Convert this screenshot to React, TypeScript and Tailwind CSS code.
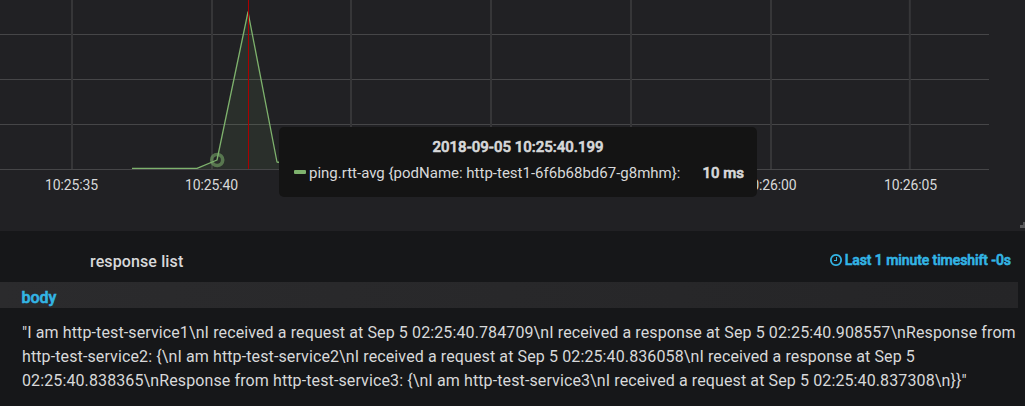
const gridRows = [34, 79, 124, 169];
const gridColumns = [72, 212, 351, 491, 631, 771, 909.8];
const labels = [
  { x: 71.5, label: "10:25:35" },
  { x: 211.5, label: "10:25:40" },
  { x: 770, label: "10:26:00" },
  { x: 910.5, label: "10:26:05" },
];
const series = "132,168.3 197,168.3 217,160 248,12 277,162 310,168";

function Chart() {
  return (
    <svg width="1025" height="231" viewBox="0 0 1025 231" className="block">
      {gridRows.map((y) => (
        <rect key={y} x="0" y={y} width="989" height="1" fill="#464648" />
      ))}
      {gridColumns.map((x) => (
        <rect key={x} x={x - 1} y="0" width="2" height="169" fill="#363638" />
      ))}
      <polygon points={`132,169 ${series} 310,169`} fill="#7eb26d" fillOpacity="0.1" />
      <polyline points={series} fill="none" stroke="#7eb26d" strokeWidth="1.3" strokeLinejoin="round" />
      <circle cx="217.2" cy="160" r="5.5" fill="none" stroke="#7eb26d" strokeOpacity="0.55" strokeWidth="3.6" />
      <rect x="248" y="0" width="1" height="169" fill="#aa0000" />
      {labels.map((t) => (
        <text key={t.label} x={t.x} y="190" textAnchor="middle" fontSize="14" letterSpacing="-0.15" fill="#d8d9da">
          {t.label}
        </text>
      ))}
      <path d="M1025 222v6h-5v-3h3v-3z" fill="#59595b" />
    </svg>
  );
}

function Tooltip() {
  return (
    <div className="absolute left-[279px] top-[127px] h-[70px] w-[478px] rounded-[5px] bg-[#141414] pt-[8px] pr-[13px] pl-[15px] text-[15px]">
      <div className="pr-[2px] text-center leading-[24px] font-medium [-webkit-text-stroke:0.6px]">
        2018-09-05 10:25:40.199
      </div>
      <div className="flex items-center pt-[2px] leading-[24px] whitespace-nowrap">
        <span className="mr-[3px] -mt-[2px] h-[4px] w-[12px] rounded-[1px] bg-[#7eb26d]" />
        <span>{"ping.rtt-avg {podName: http-test1-6f6b68bd67-g8mhm}:"}</span>
        <span className="ml-auto font-medium [-webkit-text-stroke:0.6px]">10 ms</span>
      </div>
    </div>
  );
}

function ClockIcon() {
  return (
    <svg width="12" height="12" viewBox="0 128 1536 1536" fill="currentColor">
      <path d="M896 544v448q0 14-9 23t-23 9h-320q-14 0-23-9t-9-23v-64q0-14 9-23t23-9h224v-352q0-14 9-23t23-9h64q14 0 23 9t9 23zm416 352q0-148-73-273t-198-198-273-73-273 73-198 198-73 273 73 273 198 198 273 73 273-73 198-198 73-273zm224 0q0 209-103 385.5t-279.5 279.5-385.5 103-385.5-103-279.5-279.5-103-385.5 103-385.5 279.5-279.5 385.5-103 385.5 103 279.5 279.5 103 385.5z" />
    </svg>
  );
}

export default function App() {
  return (
    <main className="h-[406px] w-[1025px] overflow-hidden bg-[#161719] font-['Roboto',sans-serif] text-[#d8d9da]">
      <section className="relative h-[231px] bg-[#212124]">
        <Chart />
        <Tooltip />
      </section>
      <section>
        <header className="flex h-[51px] items-center justify-between pt-[9px] pr-[14px] pl-[90px]">
          <h2 className="pt-[2px] text-[16px] font-medium tracking-[0.12px]">response list</h2>
          <div className="flex items-center gap-[3px] pb-[2px] text-[14px] font-medium text-[#33b5e5]">
            <ClockIcon />
            <span className="tracking-[-0.08px] [-webkit-text-stroke:0.6px]">Last 1 minute timeshift -0s</span>
          </div>
        </header>
        <div className="mr-[7px] flex h-[26px] items-center bg-linear-to-r from-[#2b2b2d] to-[#252527] pt-[5px] pl-[21.5px] text-[16px] font-medium text-[#33b5e5] [-webkit-text-stroke:0.6px]">
          body
        </div>
        <p className="pt-[13px] pl-[22px] text-[16px] leading-[24px] tracking-[0.113px] whitespace-nowrap">
          {'"I am http-test-service1\\nI received a request at Sep 5 02:25:40.784709\\nI received a response at Sep 5 02:25:40.908557\\nResponse from'}
          <br />
          {"http-test-service2: {\\nI am http-test-service2\\nI received a request at Sep 5 02:25:40.836058\\nI received a response at Sep 5"}
          <br />
          {'02:25:40.838365\\nResponse from http-test-service3: {\\nI am http-test-service3\\nI received a request at Sep 5 02:25:40.837308\\n}}"'}
        </p>
      </section>
    </main>
  );
}
